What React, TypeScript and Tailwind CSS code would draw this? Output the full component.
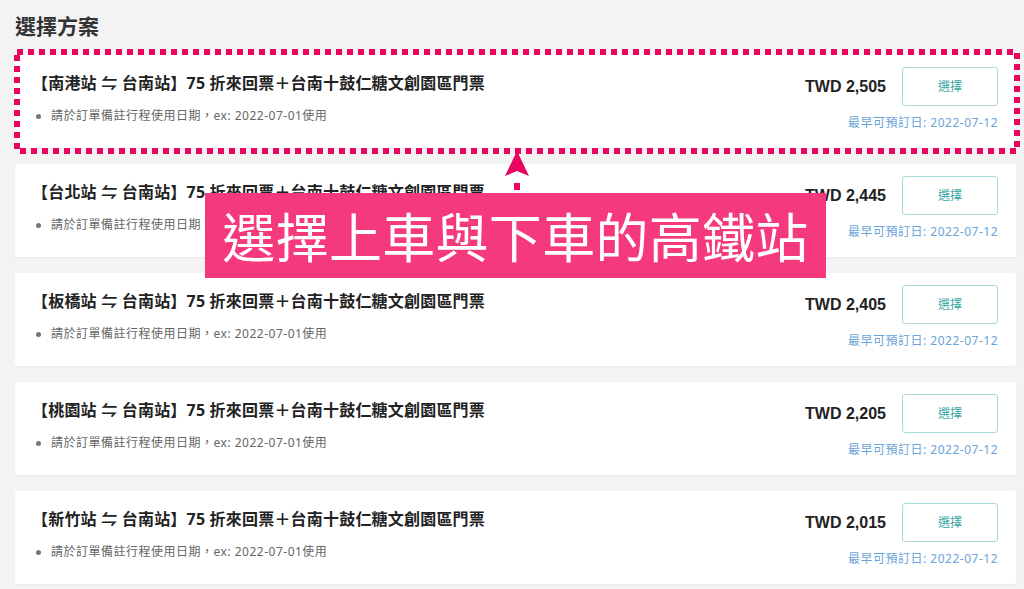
import React from "react";

type Plan = {
  from: string;
  price: string;
};

const plans: Plan[] = [
  { from: "南港站", price: "TWD 2,505" },
  { from: "台北站", price: "TWD 2,445" },
  { from: "板橋站", price: "TWD 2,405" },
  { from: "桃園站", price: "TWD 2,205" },
  { from: "新竹站", price: "TWD 2,015" },
];

const cjk = { fontFamily: '"Noto Sans", "Noto Sans CJK TC", sans-serif' };

const PlanCard = ({ plan }: { plan: Plan }) => {
  return (
    <div className="flex h-[93px] justify-between rounded-[3px] bg-white pl-[17px] pr-[18px] pt-[12px] shadow-[0_1px_2px_rgba(0,0,0,0.04)]">
      <div className="pt-[4px]">
        <div className="text-[16px] font-bold leading-[24px] tracking-[0.2px] text-[#222]">
          【{plan.from} ⇋ 台南站】75 折來回票＋台南十鼓仁糖文創園區門票
        </div>
        <ul className="mt-[12px] pl-[19px]">
          <li className="relative text-[12px] leading-[18px] tracking-[0.5px] text-[#666]">
            <span className="absolute left-[-15px] top-[7px] h-[5px] w-[5px] rounded-full bg-[#777]" />
            請於訂單備註行程使用日期，ex: 2022-07-01使用
          </li>
        </ul>
      </div>
      <div className="flex flex-col items-end">
        <div className="flex items-center gap-[16px]">
          <span
            className="text-[16px] font-bold text-[#222]"
            style={{ fontFamily: '"Liberation Sans", Arial, sans-serif' }}
          >
            {plan.price}
          </span>
          <button className="h-[39px] w-[96px] rounded-[3px] border border-[#a9d8d8] bg-white text-[12px] text-[#3aa6a6]">
            選擇
          </button>
        </div>
        <div className="mt-[8px] text-[12px] leading-[18px] tracking-[0.5px] text-[#6aa4d8]">
          最早可預訂日: 2022-07-12
        </div>
      </div>
    </div>
  );
};

export default function App() {
  return (
    <div className="relative h-[589px] w-[1024px] overflow-hidden bg-[#f3f3f3] px-[15px]" style={cjk}>
      <h2 className="pl-[0px] pt-[11px] text-[21px] font-bold leading-[30px] text-[#333]">選擇方案</h2>
      <div className="mt-[14px] flex w-[1001px] flex-col gap-[16px]">
        {plans.map((p) => (
          <PlanCard key={p.from} plan={p} />
        ))}
      </div>

      {/* annotation overlay */}
      <svg className="pointer-events-none absolute left-0 top-0" width="1024" height="589">
        <rect
          x="17"
          y="52"
          width="1000"
          height="99"
          fill="none"
          stroke="#e8045f"
          strokeWidth="6"
          strokeDasharray="6 5"
        />
        <path d="M517 151 L529 176 L517 171 L505 176 Z" fill="#e8045f" />
        <rect x="514" y="183" width="6" height="7" fill="#e8045f" />
      </svg>
      <div className="absolute left-[205px] top-[193px] flex h-[85px] w-[621px] items-center justify-center bg-[#f5397d]">
        <span className="text-[53px] leading-none tracking-[0.3px] text-white" style={{ fontFamily: '"Noto Sans CJK TC", sans-serif' }}>
          選擇上車與下車的高鐵站
        </span>
      </div>
    </div>
  );
}
